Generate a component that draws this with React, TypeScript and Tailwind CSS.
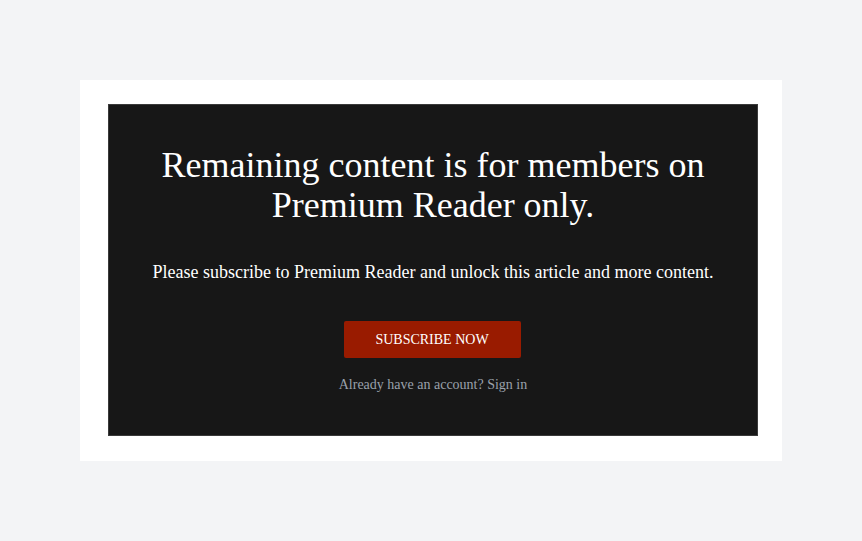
export default function App() {
  return (
    <div className="min-h-[541px] w-full bg-[#f3f4f6] flex items-center justify-center" style={{ fontFamily: '"Liberation Serif", "Times New Roman", serif' }}>
      <div className="w-[702px] h-[381px] bg-white pl-[28px] pr-[24px] pt-[24px] pb-[25px]">
        <div className="w-[650px] h-[332px] bg-[#171717] border border-[#3a3a3a] flex flex-col items-center pt-[40px] text-center">
          <h1 className="text-[36px] leading-[40px] text-white px-10 font-normal">
            Remaining content is for members on
            <br />
            Premium Reader only.
          </h1>
          <p className="mt-[33px] text-[18px] leading-[28px] text-white">
            Please subscribe to Premium Reader and unlock this article and more content.
          </p>
          <button className="mt-[35px] w-[177px] h-[37px] bg-[#991b00] rounded-[2px] text-white text-[14px] uppercase -translate-x-[1px]">
            Subscribe Now
          </button>
          <p className="mt-[17px] text-[14px] leading-[20px] text-[#9aa1ab]">
            Already have an account? Sign in
          </p>
        </div>
      </div>
    </div>
  );
}
